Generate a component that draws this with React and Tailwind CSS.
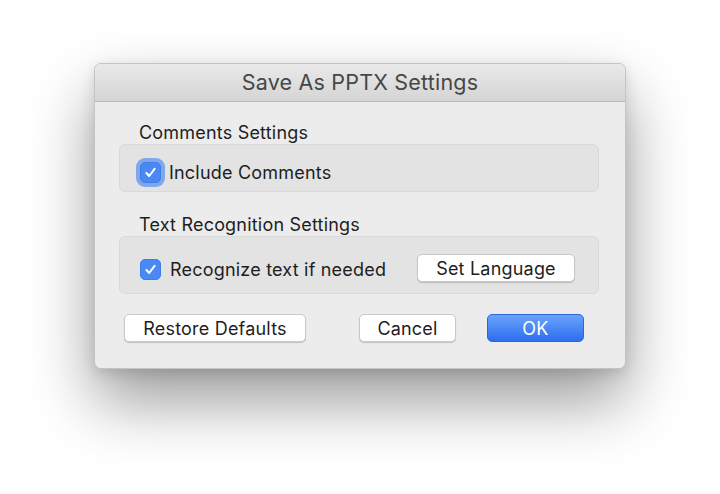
import { useState } from "react";

const Check = ({ checked, focused, onChange }) => (
  <button
    onClick={onChange}
    className={`w-[21px] h-[21px] rounded-[5px] flex items-center justify-center shrink-0 ${
      checked ? "bg-[#4a89f5] border border-[#3f7ee8]" : "bg-white border border-[#b5b5b5]"
    } ${focused ? "ring-[4px] ring-[#7fa8ec]" : ""}`}
  >
    {checked && (
      <svg width="13" height="13" viewBox="0 0 13 13">
        <path d="M2.4 7 L5.2 10 L10.6 2.8" fill="none" stroke="white" strokeWidth="2" strokeLinecap="round" strokeLinejoin="round" />
      </svg>
    )}
  </button>
);

const Btn = ({ children, className = "", primary }) => (
  <button
    className={`h-[28px] rounded-[5px] text-[18px] tracking-[0.2px] flex items-center justify-center ${
      primary
        ? "bg-gradient-to-b from-[#6aa3fa] to-[#2e6df0] text-white border border-[#2d67e0]"
        : "bg-white text-[#1e1e1e] border border-[#c9c9c9] shadow-[0_1px_1px_rgba(0,0,0,0.18)]"
    } ${className}`}
  >
    {children}
  </button>
);

const App = () => {
  const [comments, setComments] = useState(true);
  const [ocr, setOcr] = useState(true);

  return (
    <div className="w-[720px] h-[494px] bg-white pl-[94px] pt-[63px]" style={{ fontFamily: "Inter, 'Noto Sans', sans-serif" }}>
      <div className="w-[532px] h-[306px] rounded-[7px] bg-[#ececec] border border-[#c4c4c4] shadow-[0_32px_64px_rgba(0,0,0,0.4),0_4px_14px_rgba(0,0,0,0.12)] overflow-hidden flex flex-col">
        <div className="h-[38px] shrink-0 bg-gradient-to-b from-[#e9e9e9] to-[#d5d5d5] border-b border-[#b9b9b9] flex items-center justify-center text-[21.5px] tracking-[0.2px] text-[#474747]">
          Save As PPTX Settings
        </div>
        <div className="flex flex-col pl-[24px] pr-[26px] text-[18px] tracking-[0.2px] text-[#1e1e1e]">
          <div className="pl-[20px] h-[42px] pt-[20px] leading-[22px]">Comments Settings</div>
          <div className="h-[48px] shrink-0 pt-[9px] rounded-[6px] bg-[#e3e3e3] border border-[#d9d9d9] flex items-center pl-[20px] gap-[8px]">
            <Check checked={comments} focused onChange={() => setComments(!comments)} />
            <span>Include Comments</span>
          </div>
          <div className="pl-[20px] h-[44px] pt-[22px] leading-[22px]">Text Recognition Settings</div>
          <div className="h-[58px] shrink-0 pt-[9px] rounded-[6px] bg-[#e3e3e3] border border-[#d9d9d9] flex items-center pl-[20px] pr-[23px]">
            <Check checked={ocr} onChange={() => setOcr(!ocr)} />
            <span className="ml-[9px]">Recognize text if needed</span>
            <Btn className="ml-auto w-[158px] h-[27px] -mt-[3px]">Set Language</Btn>
          </div>
          <div className="flex items-center mt-[20px]">
            <Btn className="w-[182px] ml-[5px]">Restore Defaults</Btn>
            <Btn className="w-[97px] ml-[53px]">Cancel</Btn>
            <Btn primary className="w-[97px] ml-[31px]">OK</Btn>
          </div>
        </div>
      </div>
    </div>
  );
};

export default App;
